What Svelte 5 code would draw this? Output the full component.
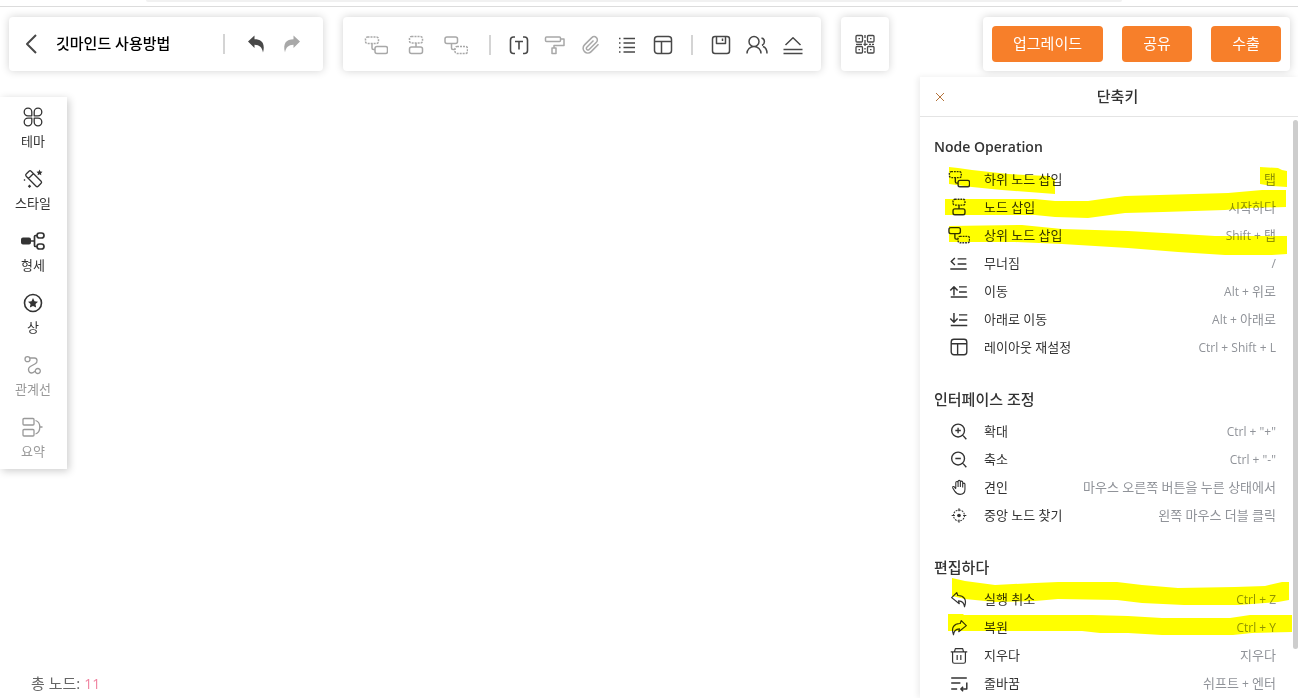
<script>
    const undoPath = 'M4 9.5L10.5 3.5V7.2C17.5 7.2 21.5 11 19 20.5 18.2 15.5 15.5 13 10.5 12.8V16z';
    const redoPath = 'M20 9.5L13.5 3.5V7.2C6.5 7.2 2.5 11 5 20.5 5.8 15.5 8.5 13 13.5 12.8V16z';

    // every icon is a list of paths on a 24x24 grid
    const icons = {
        back: [{ d: 'M17 3L8 12l9 9', w: 2 }],
        undo: [{ d: undoPath, fill: true }],
        redo: [{ d: redoPath, fill: true }],
        undoLine: [{ d: 'M4 10.5L9.5 5l1.200 3.200c6.500-.200 10.300 4.300 7.300 12.300-.300-4-2.500-6.200-6.500-6.500l.800 3.200z' }],
        redoLine: [{ d: 'M20 10.5L14.5 5l-1.200 3.200c-6.500-.200-10.300 4.300-7.300 12.300.300-4 2.500-6.200 6.500-6.500l-.800 3.200z' }],
        child: [
            { d: 'M3.5 4h9a2 2 0 0 1 2 2v2.5a2 2 0 0 1-2 2h-9a2 2 0 0 1-2-2V6a2 2 0 0 1 2-2z', dash: true, w: 1.5 },
            { d: 'M13 13.5h8.5a2 2 0 0 1 2 2v3a2 2 0 0 1-2 2H13a2 2 0 0 1-2-2v-3a2 2 0 0 1 2-2zM8 10.5V15a1.5 1.5 0 0 0 1.5 1.5H11', w: 1.5 }
        ],
        sibling: [
            { d: 'M7.5 3.5h9a2 2 0 0 1 2 2V8a2 2 0 0 1-2 2h-9a2 2 0 0 1-2-2V5.500a2 2 0 0 1 2-2z', dash: true, w: 1.5 },
            { d: 'M7.5 14h9a2 2 0 0 1 2 2v2.500a2 2 0 0 1-2 2h-9a2 2 0 0 1-2-2V16a2 2 0 0 1 2-2zM12 10v4', w: 1.5 }
        ],
        parent: [
            { d: 'M3 4h8.500a2 2 0 0 1 2 2v2.500a2 2 0 0 1-2 2H3a2 2 0 0 1-2-2V6a2 2 0 0 1 2-2zM7.500 10.500V15a1.500 1.500 0 0 0 1.500 1.500h2', w: 1.5 },
            { d: 'M13 13.500h8.500a2 2 0 0 1 2 2v3a2 2 0 0 1-2 2H13a2 2 0 0 1-2-2v-3a2 2 0 0 1 2-2z', dash: true, w: 1.5 }
        ],
        text: [{ d: 'M8 4H6.500a3 3 0 0 0-3 3v10.500a3 3 0 0 0 3 3H8M16 4h1.500a3 3 0 0 1 3 3v10.500a3 3 0 0 1-3 3H16M8 8.500h8M12 8.500v8', w: 1.6 }],
        roller: [{ d: 'M3.500 4h13a1 1 0 0 1 1 1v2.500a1 1 0 0 1-1 1h-13a1 1 0 0 1-1-1V5a1 1 0 0 1 1-1zM17.500 6H21v6.500H11V15M9 15h4v5.500H9z', w: 1.5 }],
        clip: [{ d: 'M19.500 11.300l-7.300 7.300a4.700 4.700 0 0 1-6.700-6.700l7.300-7.300a3.200 3.200 0 0 1 4.600 4.600l-7.300 7.300a1.600 1.600 0 0 1-2.300-2.300l6.700-6.700', w: 1.5 }],
        list: [{ d: 'M4 5.500h1.500M4 10h1.500M4 14.500h1.500M4 19h1.500M8.500 5.500H20M8.500 10H20M8.500 14.500H20M8.500 19H20' }],
        layout: [{ d: 'M6.500 3.500h11a3 3 0 0 1 3 3v11a3 3 0 0 1-3 3h-11a3 3 0 0 1-3-3v-11a3 3 0 0 1 3-3zM3.500 8.500h17M10.500 8.500v12', w: 1.5 }],
        save: [{ d: 'M6 3.500h12a2.500 2.500 0 0 1 2.500 2.500v12a2.500 2.500 0 0 1-2.500 2.500H6A2.500 2.500 0 0 1 3.500 18V6A2.500 2.500 0 0 1 6 3.500zM7.500 3.500v7h9v-7M13.500 5.500v2.500', w: 1.5 }],
        people: [{ d: 'M9 3.500a5 5 0 1 1 0 10 5 5 0 1 1 0-10zM2 20.500a7 7 0 0 1 14 0M16.500 5c3.600.800 3.900 5.800.500 7.500M18 13.500c2.800 1 4 3.500 4 7', w: 1.5 }],
        eject: [{ d: 'M4.500 12L12 4.800l7.500 7.200M2.500 16.500h19M2.500 20.500h19', w: 1.5 }],
        qr: [
            { d: 'M4 3.500h4.500a1 1 0 0 1 1 1V9a1 1 0 0 1-1 1H4a1 1 0 0 1-1-1V4.500a1 1 0 0 1 1-1zM15.500 3.500H20a1 1 0 0 1 1 1V9a1 1 0 0 1-1 1h-4.500a1 1 0 0 1-1-1V4.500a1 1 0 0 1 1-1zM4 14.500h4.500a1 1 0 0 1 1 1V20a1 1 0 0 1-1 1H4a1 1 0 0 1-1-1v-4.500a1 1 0 0 1 1-1zM15.500 14.500H20a1 1 0 0 1 1 1V20a1 1 0 0 1-1 1h-4.500a1 1 0 0 1-1-1v-4.500a1 1 0 0 1 1-1z' },
            { d: 'M5.500 6.700h1.500M17 6.700h1.500M5.500 17.700h1.500M17 17.700h1.500M12 3V6M12 8v6M12 16v1.500M12 19v2M3 12.300h6M10.500 12.300h4M16 12.300h2M19 12.300h2' }
        ],
        theme: [{ d: 'M10.800 10.800H7a3.800 3.800 0 1 1 3.800-3.800zM13.200 10.800H17a3.800 3.800 0 1 0-3.800-3.800zM10.800 13.200H7a3.800 3.800 0 1 0 3.800 3.800zM13.200 13.200H17a3.800 3.800 0 1 1-3.800 3.800z' }],
        style: [
            { d: 'M5.200 7L8 4.200a1.500 1.500 0 0 1 2.100 0l10 10a1.500 1.500 0 0 1 0 2.100l-2.900 2.900a1.500 1.500 0 0 1-2.100 0l-9.900-10a1.500 1.500 0 0 1 0-2.200zM7.500 11.500l5-5' },
            { d: 'M18.500 2.500l.900 1.900 2.100.300-1.500 1.500.300 2.100-1.800-1-1.900 1 .400-2.100L15.500 4.700l2.100-.300zM8.500 17.500l1.700 1.700-1.700 1.700-1.700-1.700zM3.500 12l1 1-1 1-1-1z', fill: true }
        ],
        structure: [
            { d: 'M2 8.500h6a2 2 0 0 1 2 2v3a2 2 0 0 1-2 2H2a2 2 0 0 1-2-2v-3a2 2 0 0 1 2-2z', fill: true },
            { d: 'M9 12h4.500M16 6.500h-1.500a1 1 0 0 0-1 1v9a1 1 0 0 0 1 1H16M18.500 4h2a2.500 2.500 0 0 1 0 5h-2a2.500 2.500 0 0 1 0-5zM18.500 15h2a2.500 2.500 0 0 1 0 5h-2a2.500 2.500 0 0 1 0-5z', w: 1.7 }
        ],
        star: [
            { d: 'M12 3.500a8.500 8.500 0 1 1 0 17 8.500 8.500 0 1 1 0-17z', w: 1.6 },
            { d: 'M12 7l1.500 3.200 3.500.500-2.500 2.400.600 3.500-3.100-1.700-3.100 1.700.600-3.500L7 10.700l3.500-.500z', fill: true }
        ],
        relation: [{ d: 'M6.500 3.700a2.500 2.500 0 1 1 0 5 2.500 2.500 0 1 1 0-5zM16.800 15.500a2.500 2.500 0 1 1 0 5 2.500 2.500 0 1 1 0-5zM9 5h4.500c3.200 0 3.300 4.300.800 5.700l-5 2.800c-3 1.800-2 6.500 1.200 6.500 2 0 3-1.500 3.800-2' }],
        summary: [{ d: 'M3 3.500h9a1 1 0 0 1 1 1V9a1 1 0 0 1-1 1H3a1 1 0 0 1-1-1V4.500a1 1 0 0 1 1-1zM3 14.500h9a1 1 0 0 1 1 1V20a1 1 0 0 1-1 1H3a1 1 0 0 1-1-1v-4.500a1 1 0 0 1 1-1zM14.500 5.500c3 1 4.300 3.500 4.300 6.500s-1.300 6-4.300 7M18.800 12h2.700' }],
        collapse: [{ d: 'M7.500 6.500l-4 3.800 4 3.800M10.500 7.500h9.500M10.500 13h9.500M2.500 18.500h18', w: 1.6 }],
        up: [{ d: 'M6.500 17V7.500M2.500 11.500l4-4 4 4M12 7.500h8.500M12 13h8.500M3 18.500h18', w: 1.6 }],
        down: [{ d: 'M6.500 5.500v9.500M2.500 11.500l4 4 4-4M12 7.500h9M12 13h9M3 19h18', w: 1.6 }],
        zoomIn: [{ d: 'M11 4.500a7 7 0 1 1 0 14 7 7 0 1 1 0-14zM16 16.500l4 4.500M8 11.500h6M11 8.500v6', w: 1.5 }],
        zoomOut: [{ d: 'M11 4.500a7 7 0 1 1 0 14 7 7 0 1 1 0-14zM16 16.500l4 4.500M8 11.500h6', w: 1.5 }],
        hand: [{ d: 'M8.500 13.500V7.300a1.200 1.200 0 0 1 2.500 0V12M11 12V6a1.200 1.200 0 0 1 2.500 0v6M13.500 12V6.800a1.200 1.200 0 0 1 2.500 0v5.700M16 12.500V9a1.200 1.200 0 0 1 2.500 0v5.500c0 3.400-1.800 5.500-5.300 5.500-3 0-4.500-1.300-5.900-3.500L5.200 13c-.500-1.500.800-2 1.800-1.100l1.500 2.200', w: 1.2 }],
        target: [
            { d: 'M12 6.500a6 6 0 1 1 0 12 6 6 0 1 1 0-12z', dash: true, w: 1.1 },
            { d: 'M12 4.500v3.500M12 17v3.500M4 12.500h3.500M16.500 12.500H20', w: 1.1 },
            { d: 'M12 10.500a2 2 0 1 1 0 4 2 2 0 1 1 0-4z', fill: true }
        ],
        trash: [{ d: 'M3 8.500h18M7 8.500l1-3.500h8l1 3.500M5 8.500V19a2 2 0 0 0 2 2h10a2 2 0 0 0 2-2V8.500M10 12v5.500M14 12v5.500' }],
        wrap: [{ d: 'M3.500 6.500h17M3.500 12h10M3.500 18.500H10M20.500 11.500v7H14M16.500 16L14 18.500l2.500 2.500', w: 1.6 }]
    };

    const sideItems = [
        { icon: 'theme', label: '테마' },
        { icon: 'style', label: '스타일' },
        { icon: 'structure', label: '형세' },
        { icon: 'star', label: '상' },
        { icon: 'relation', label: '관계선', disabled: true },
        { icon: 'summary', label: '요약', disabled: true }
    ];

    const toolGroups = [
        [
            { icon: 'child', label: '하위 노드 삽입', disabled: true },
            { icon: 'sibling', label: '노드 삽입', disabled: true },
            { icon: 'parent', label: '상위 노드 삽입', disabled: true }
        ],
        [
            { icon: 'text', label: '텍스트' },
            { icon: 'roller', label: '서식', disabled: true },
            { icon: 'clip', label: '첨부', disabled: true },
            { icon: 'list', label: '목록' },
            { icon: 'layout', label: '레이아웃 재설정' }
        ],
        [
            { icon: 'save', label: '저장' },
            { icon: 'people', label: '협업' },
            { icon: 'eject', label: '접기' }
        ]
    ];

    const sections = [
        {
            title: 'Node Operation',
            rows: [
                { icon: 'child', label: '하위 노드 삽입', keys: '탭' },
                { icon: 'sibling', label: '노드 삽입', keys: '시작하다' },
                { icon: 'parent', label: '상위 노드 삽입', keys: 'Shift + 탭' },
                { icon: 'collapse', label: '무너짐', keys: '/' },
                { icon: 'up', label: '이동', keys: 'Alt + 위로' },
                { icon: 'down', label: '아래로 이동', keys: 'Alt + 아래로' },
                { icon: 'layout', label: '레이아웃 재설정', keys: 'Ctrl + Shift + L' }
            ]
        }, {
            title: '인터페이스 조정',
            rows: [
                { icon: 'zoomIn', label: '확대', keys: 'Ctrl + "+"' },
                { icon: 'zoomOut', label: '축소', keys: 'Ctrl + "-"' },
                { icon: 'hand', label: '견인', keys: '마우스 오른쪽 버튼을 누른 상태에서' },
                { icon: 'target', label: '중앙 노드 찾기', keys: '왼쪽 마우스 더블 클릭' }
            ]
        }, {
            title: '편집하다',
            rows: [
                { icon: 'undoLine', label: '실행 취소', keys: 'Ctrl + Z' },
                { icon: 'redoLine', label: '복원', keys: 'Ctrl + Y' },
                { icon: 'trash', label: '지우다', keys: '지우다' },
                { icon: 'wrap', label: '줄바꿈', keys: '쉬프트 + 엔터' }
            ]
        }
    ];

    // marker strokes over the list
    const marks = [
        '29,50 38,51 52,53 88,57 128,59 135,62 135,77 122,76 82,73 52,70 29,67',
        '340,50 358,51 362,53 367,54 367,70 352,69 340,67',
        '25,82 115,82 135,84 168,84 182,82 205,79 308,76 342,73 366,73 366,90 328,91 305,93 243,95 205,96 168,101 135,100 115,98 25,98',
        '29,109 102,108 142,112 208,114 262,117 295,119 367,119 367,137 352,138 305,138 258,135 208,131 142,127 95,125 29,125',
        '32,461 45,464 75,468 115,466 138,465 197,465 222,468 258,471 315,470 345,469 362,465 369,465 369,483 358,485 318,488 264,488 222,486 197,483 138,482 115,484 75,485 45,482 32,479',
        '28,497 43,497 44,498 172,498 208,499 242,501 310,501 330,498 372,498 372,515 332,516 313,518 242,518 208,516 180,516 162,514 28,514'
    ];

    // latin text is set one size smaller than hangul
    const splitKeys = (text) => text.match(/[\x20-\x7e]+|[^\x20-\x7e]+/g);
    const isLatin = (text) => /^[\x20-\x7e]+$/.test(text);

    let nodeCount = $state(11);
    let panelOpen = $state(true);
</script>

{#snippet icon(name)}
    <svg class="icon" viewBox="0 0 24 24" aria-hidden="true">
        {#each icons[name] as p}
            <path d={p.d} class:solid={p.fill} class:dash={p.dash} stroke-width={p.w ?? 1.3} />
        {/each}
    </svg>
{/snippet}

<div class="page">
    <div class="strip"><div class="tab"></div></div>

    <header>
        <div class="card file">
            <button class="tool" aria-label="뒤로">{@render icon('back')}</button>
            <h1>깃마인드 사용방법</h1>
            <span class="divider"></span>
            <div class="group history">
                <button class="tool" aria-label="실행 취소">{@render icon('undo')}</button>
                <button class="tool" aria-label="복원" disabled>{@render icon('redo')}</button>
            </div>
        </div>

        <div class="card tools">
            {#each toolGroups as group, i}
                {#if i > 0}<span class="divider"></span>{/if}
                <div class="group" class:nodes={i === 0}>
                    {#each group as tool}
                        <button class="tool" aria-label={tool.label} disabled={tool.disabled}>{@render icon(tool.icon)}</button>
                    {/each}
                </div>
            {/each}
        </div>

        <div class="card qr">
            <button class="tool" aria-label="QR">{@render icon('qr')}</button>
        </div>

        <div class="card actions">
            <button class="primary">업그레이드</button>
            <button class="primary">공유</button>
            <button class="primary">수출</button>
        </div>
    </header>

    <main>
        <div class="left">
            <nav>
                {#each sideItems as item}
                    <button class="side" disabled={item.disabled}>
                        {@render icon(item.icon)}
                        <span>{item.label}</span>
                    </button>
                {/each}
            </nav>
            <p class="count">총 노드: <span>{nodeCount}</span></p>
        </div>

        {#if panelOpen}
            <aside>
                <div class="panel_head">
                    <button class="close" aria-label="닫기" onclick={() => (panelOpen = false)}>
                        <svg viewBox="0 0 10 10"><path d="M1 1l8 8M9 1l-8 8" /></svg>
                    </button>
                    <h2>단축키</h2>
                </div>
                <div class="panel_body">
                    {#each sections as section}
                        <section>
                            <h3 class:latin_title={isLatin(section.title)}>{section.title}</h3>
                            <ul>
                                {#each section.rows as row}
                                    <li>
                                        {@render icon(row.icon)}
                                        <span>{row.label}</span>
                                        <span class="keys">{#each splitKeys(row.keys) as part}<span class:latin={/[!-~]/.test(part)}>{part}</span>{/each}</span>
                                    </li>
                                {/each}
                            </ul>
                        </section>
                    {/each}
                    <svg class="marks" viewBox="0 0 378 581" aria-hidden="true">
                        {#each marks as points}
                            <polygon {points} />
                        {/each}
                    </svg>
                    <div class="thumb"></div>
                </div>
            </aside>
        {/if}
    </main>
</div>

<style>
    :global(body) {
        background: #fff;
        font-family: "Open Sans", "Noto Sans CJK KR", sans-serif;
        color: #333;
    }

    .page {
        display: flex;
        flex-direction: column;
        height: 100vh;
        overflow: hidden;
    }

    h1, h2, h3, p, ul {
        margin: 0;
        padding: 0;
    }

    button {
        border: 0;
        padding: 0;
        background: none;
        font: inherit;
        color: inherit;
        cursor: pointer;
    }

    button:disabled {
        color: #a8a8a8;
        cursor: default;
    }

    .icon {
        display: block;
        width: 24px;
        height: 24px;
        flex: none;
        fill: none;
        stroke: currentColor;
        stroke-linejoin: round;
    }

    .solid {
        fill: currentColor;
        stroke: none;
    }

    .dash {
        stroke-dasharray: 2 1;
    }

    .strip {
        height: 6px;
        flex: none;
        border-bottom: 1px solid #dcdcdc;
    }

    .tab {
        height: 2px;
        margin: 0 176px 0 146px;
        background: #f1f1f1;
        border-radius: 0 0 4px 4px;
    }

    header {
        display: flex;
        flex: none;
        gap: 20px;
        padding: 10px 8px 0 9px;
    }

    .card {
        display: flex;
        align-items: center;
        box-sizing: border-box;
        height: 54px;
        background: #fff;
        border-radius: 4px;
        box-shadow: 0 0 8px rgba(0, 0, 0, 0.18);
        color: #484848;
    }

    .file {
        width: 314px;
        padding: 0 19px 0 10px;
    }

    h1 {
        flex: 1;
        padding: 0 0 2px 13px;
        font-size: 15px;
        line-height: 20px;
        font-weight: 500;
        color: #000;
    }

    .tools {
        padding: 2px 16px 0 21px;
    }

    .group {
        display: flex;
        gap: 12px;
    }

    .history {
        margin-left: 3px;
    }

    .nodes {
        gap: 16px;
        margin-right: 5px;
    }

    .divider {
        width: 2px;
        height: 20px;
        margin: 0 16px;
        background: #d4d4d4;
    }

    .qr {
        padding: 0 12px;
    }

    .actions {
        gap: 19px;
        padding: 0 9px;
        margin-left: auto;
    }

    .primary {
        min-width: 70px;
        height: 36px;
        padding: 0 21px 2px;
        border-radius: 4px;
        background: #f77f2a;
        color: #fff;
        font-size: 15px;
        line-height: 20px;
    }

    main {
        display: flex;
        flex: 1;
        min-height: 0;
        justify-content: space-between;
    }

    .left {
        display: flex;
        flex-direction: column;
        justify-content: space-between;
        padding-top: 26px;
    }

    nav {
        width: 67px;
        background: #fff;
        box-shadow: 2px 2px 8px rgba(0, 0, 0, 0.2);
    }

    .side {
        display: flex;
        flex-direction: column;
        align-items: center;
        gap: 2px;
        width: 100%;
        height: 62px;
        padding: 8px 1px 8px 0;
        font-size: 13px;
        line-height: 20px;
    }

    .side:disabled {
        color: #999;
    }

    .count {
        padding: 0 0 4px 31px;
        font-size: 15px;
        line-height: 20px;
        color: #666;
    }

    .count span {
        font-size: 14px;
        color: #f083a0;
    }

    aside {
        position: relative;
        display: flex;
        flex-direction: column;
        width: 378px;
        margin-top: 6px;
        background: #fff;
        box-shadow: -2px 0 6px rgba(0, 0, 0, 0.08);
    }

    .panel_head {
        display: flex;
        flex: none;
        align-items: center;
        height: 39px;
        padding: 0 8px 0 15px;
        border-bottom: 1px solid #e4e4e4;
    }

    .close svg {
        display: block;
        width: 10px;
        height: 10px;
        stroke: #b5743c;
        stroke-width: 1;
    }

    h2 {
        flex: 1;
        padding-bottom: 2px;
        text-align: center;
        font-size: 15px;
        line-height: 20px;
        font-weight: 500;
    }

    .panel_body {
        position: relative;
        flex: 1;
        min-height: 0;
        overflow: hidden;
        padding: 12px 22px 0 14px;
    }

    section {
        margin-bottom: 20px;
    }

    h3 {
        font-size: 15px;
        line-height: 36px;
        font-weight: 500;
    }

    .latin_title {
        font-size: 14px;
        font-weight: 600;
    }

    ul {
        list-style: none;
    }

    li {
        display: flex;
        align-items: center;
        gap: 14px;
        height: 28px;
        padding-left: 14px;
        font-size: 13px;
        line-height: 20px;
    }

    li .icon {
        width: 22px;
        height: 22px;
    }

    .keys {
        margin-left: auto;
        color: #909399;
        white-space: pre;
    }

    .latin {
        font-size: 12px;
    }

    .marks {
        position: absolute;
        top: 0;
        left: 0;
        width: 378px;
        height: 581px;
        fill: #ff0;
        mix-blend-mode: multiply;
        pointer-events: none;
    }

    .thumb {
        position: absolute;
        top: 3px;
        right: 0;
        width: 5px;
        height: 91%;
        border-radius: 3px;
        background: #cdcdcd;
    }
</style>
